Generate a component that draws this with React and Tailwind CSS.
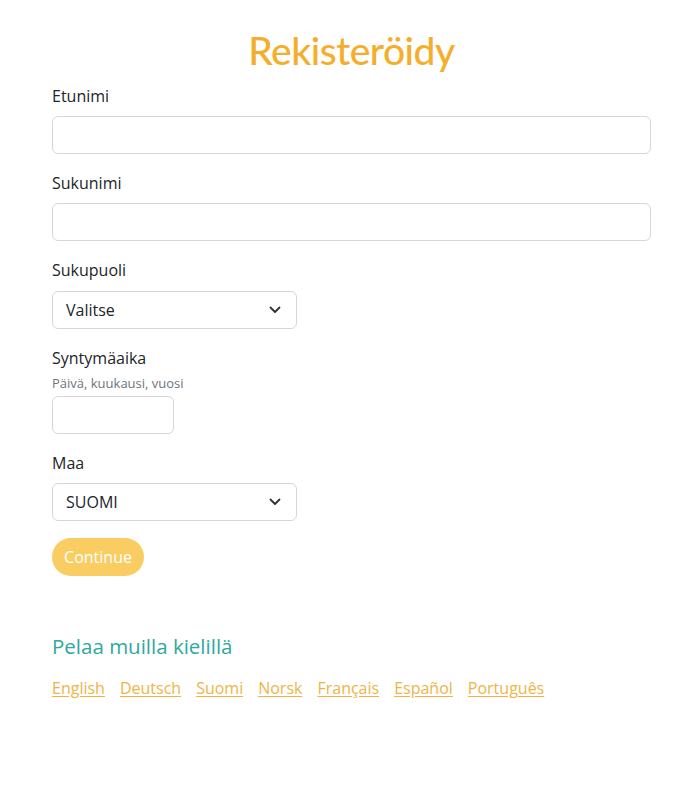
import React from "react";

const Chevron = () => (
  <svg width="12" height="8" viewBox="0 0 12 8" fill="none" className="shrink-0">
    <path d="M1.5 1.5 L6 6 L10.5 1.5" stroke="#333" strokeWidth="1.8" strokeLinecap="round" strokeLinejoin="round" />
  </svg>
);

export default function App() {
  const langs = ["English", "Deutsch", "Suomi", "Norsk", "Français", "Español", "Português"];
  return (
    <div className="min-h-[810px] bg-white pl-[52px] pr-[49px] text-[#212529]" style={{ fontFamily: '"Open Sans", "Noto Sans", sans-serif' }}>
      <h1 className="pt-[29px] text-center text-[39px] leading-[42px] font-medium text-[#f5ae2c] tracking-[-0.5px]" style={{ fontFamily: 'Lato, "Open Sans", sans-serif' }}>
        Rekisteröidy
      </h1>
      <div className="mt-[13px]">
        <label className="block text-[16px] leading-[24px] mb-2">Etunimi</label>
        <div className="h-[38px] w-full rounded-[6px] border border-[#d6d6d6] mb-[17px]" />
        <label className="block text-[16px] leading-[24px] mb-2">Sukunimi</label>
        <div className="h-[38px] w-full rounded-[6px] border border-[#d6d6d6] mb-[17px]" />
        <label className="block text-[16px] leading-[24px] mb-[9px]">Sukupuoli</label>
        <div className="flex h-[38px] w-[245px] items-center justify-between rounded-[6px] border border-[#d6d6d6] pl-[13px] pr-[15px] mb-[17px]">
          <span className="text-[16px]">Valitse</span>
          <Chevron />
        </div>
        <label className="block text-[16px] leading-[24px]">Syntymäaika</label>
        <div className="text-[13px] leading-[20px] text-[#6c757d] mt-[3px] mb-[3px]">Päivä, kuukausi, vuosi</div>
        <div className="h-[38px] w-[122px] rounded-[6px] border border-[#d6d6d6] mb-[17px]" />
        <label className="block text-[16px] leading-[24px] mb-2">Maa</label>
        <div className="flex h-[38px] w-[245px] items-center justify-between rounded-[6px] border border-[#d6d6d6] pl-[13px] pr-[15px] mb-[17px]">
          <span className="text-[16px]">SUOMI</span>
          <Chevron />
        </div>
        <button className="h-[38px] w-[92px] rounded-full bg-[#f9cd62] text-white text-[16px]">Continue</button>
      </div>
      <h2 className="mt-[56px] text-[20.5px] leading-[28px] text-[#2fa8a0] font-medium">Pelaa muilla kielillä</h2>
      <div className="mt-[16px] flex gap-x-[15px] text-[16px] leading-[24px]">
        {langs.map((l) => (
          <a key={l} href="#" className="text-[#f0b444] underline underline-offset-2">{l}</a>
        ))}
      </div>
    </div>
  );
}
